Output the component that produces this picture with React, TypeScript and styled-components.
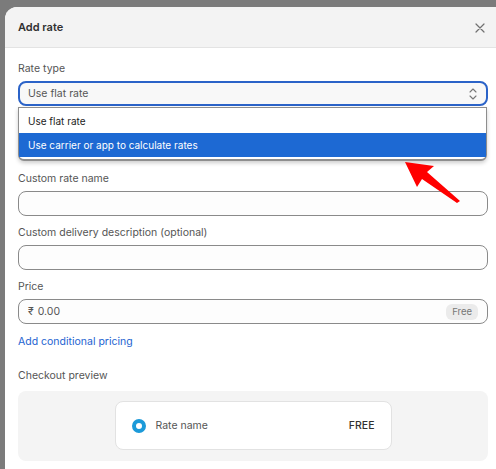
import styled, { createGlobalStyle } from 'styled-components'

const GlobalStyle = createGlobalStyle`
	html, body {
		margin: 0;
		padding: 0;
		background: #7b7b7b;
		font-family: Inter, 'Noto Sans', sans-serif;
		-webkit-font-smoothing: antialiased;
	}
	* {
		box-sizing: border-box;
	}
`

const App: React.FC = () => {
	return (
		<>
			<GlobalStyle />
			<Page>
				<Modal>
					<Header>
						<Title>Add rate</Title>
						<Close aria-label="Close">
							<svg width="10" height="10" viewBox="0 0 10 10">
								<path d="M1 1l8 8M9 1l-8 8" stroke="#707070" strokeWidth="1.2" strokeLinecap="round" />
							</svg>
						</Close>
					</Header>
					<Body>
						<Field>
							<Label>Rate type</Label>
							<Select>
								<span>Use flat rate</span>
								<svg width="10" height="14" viewBox="0 0 10 14">
									<path d="M2 5l3-3 3 3M2 9l3 3 3-3" fill="none" stroke="#777" strokeWidth="1.1" strokeLinecap="round" strokeLinejoin="round" />
								</svg>
							</Select>
							<ListBox>
								<Option>Use flat rate</Option>
								<Option active>Use carrier or app to calculate rates</Option>
							</ListBox>
						</Field>
						<Field>
							<Label>Custom rate name</Label>
							<Input />
						</Field>
						<Field>
							<Label>Custom delivery description (optional)</Label>
							<Input />
						</Field>
						<Field>
							<Label>Price</Label>
							<Input>
								<Prefix>₹</Prefix>
								<Value>0.00</Value>
								<Badge>Free</Badge>
							</Input>
						</Field>
						<LinkText>Add conditional pricing</LinkText>
						<Preview>
							<Label>Checkout preview</Label>
							<PreviewBox>
								<RateCard>
									<Radio />
									<RateName>Rate name</RateName>
									<RatePrice>FREE</RatePrice>
								</RateCard>
							</PreviewBox>
						</Preview>
					</Body>
				</Modal>
				<Arrow width="60" height="44" viewBox="0 0 60 44">
					<polygon points="0,0 29,4 22,10 55,39 52,41 17,17 12,25" fill="#ff0000" />
				</Arrow>
			</Page>
		</>
	)
}

export default App

const Page = styled.div`
	position: relative;
	width: 496px;
	height: 469px;
	overflow: hidden;
	padding: 7px 0 0 5px;
`
const Modal = styled.section`
	width: 496px;
	height: 470px;
	background: #fff;
	border-radius: 12px 0 0 0;
	overflow: hidden;
`
const Header = styled.header`
	display: flex;
	align-items: center;
	justify-content: space-between;
	height: 41px;
	padding: 0 16px 0 13px;
	background: #f3f3f3;
	border-bottom: 1px solid #e3e3e3;
`
const Title = styled.h1`
	margin: 0;
	font-size: 11px;
	font-weight: 600;
	color: #303030;
`
const Close = styled.span`
	display: flex;
	margin-top: 1px;
`
const Body = styled.div`
	padding: 11px 13px 0;
	display: flex;
	flex-direction: column;
`
const Field = styled.div`
	display: flex;
	flex-direction: column;
	margin-bottom: 7px;
`
const Label = styled.label`
	font-size: 10.5px;
	line-height: 20px;
	color: #555;
	margin-bottom: 2px;
`
const Select = styled.div`
	display: flex;
	align-items: center;
	justify-content: space-between;
	height: 25px;
	padding: 0 8px 0 8px;
	border: 2px solid #2b63c8;
	border-radius: 8px;
	background: #f8f8f8;
	font-size: 10.5px;
	color: #555;
`
const ListBox = styled.ul`
	list-style: none;
	margin: 1px 1px 1px 0;
	padding: 1px 0 2px;
	background: #fff;
	border: 1px solid #8e8e8e;
	border-bottom-width: 2px;
	border-radius: 0 0 6px 6px;
	box-shadow: 0 2px 4px rgba(0, 0, 0, 0.2);
`
const Option = styled.li<{ active?: boolean }>`
	height: 24px;
	padding: 0 9px;
	display: flex;
	align-items: center;
	font-size: 10px;
	color: ${p => (p.active ? '#fff' : '#222')};
	background: ${p => (p.active ? '#1d69d3' : '#fff')};
`
const Input = styled.div`
	display: flex;
	align-items: center;
	height: 25px;
	padding: 0 9px 0 9px;
	border: 1px solid #8a8a8a;
	border-radius: 8px;
	background: #fdfdfd;
	font-size: 10.5px;
	color: #555;
`
const Prefix = styled.span`
	margin-right: 4px;
	color: #555;
`
const Value = styled.span`
	flex: 1;
`
const Badge = styled.span`
	padding: 1px 6px;
	border-radius: 6px;
	background: #ebebeb;
	color: #777;
	font-size: 9.5px;
	line-height: 14px;
`
const LinkText = styled.a`
	font-size: 10.5px;
	line-height: 20px;
	margin-top: 1px;
	color: #2463d1;
	cursor: pointer;
`
const Preview = styled.div`
	display: flex;
	flex-direction: column;
	margin-top: 14px;
`
const PreviewBox = styled.div`
	margin-top: 3px;
	display: flex;
	justify-content: center;
	padding: 10px 0 11px;
	background: #f4f4f4;
	border-radius: 8px;
`
const RateCard = styled.div`
	display: flex;
	align-items: center;
	width: 277px;
	height: 49px;
	padding: 0 16px 0 16px;
	background: #fff;
	border: 1px solid #e2e2e2;
	border-radius: 8px;
`
const Radio = styled.span`
	width: 14px;
	height: 14px;
	border-radius: 50%;
	border: 4.5px solid #1c9ad9;
	background: #fff;
	margin-right: 10px;
`
const RateName = styled.span`
	flex: 1;
	font-size: 10.5px;
	color: #555;
`
const RatePrice = styled.span`
	font-size: 10.5px;
	font-weight: 500;
	color: #303030;
`
const Arrow = styled.svg`
	position: absolute;
	left: 405px;
	top: 162px;
`
